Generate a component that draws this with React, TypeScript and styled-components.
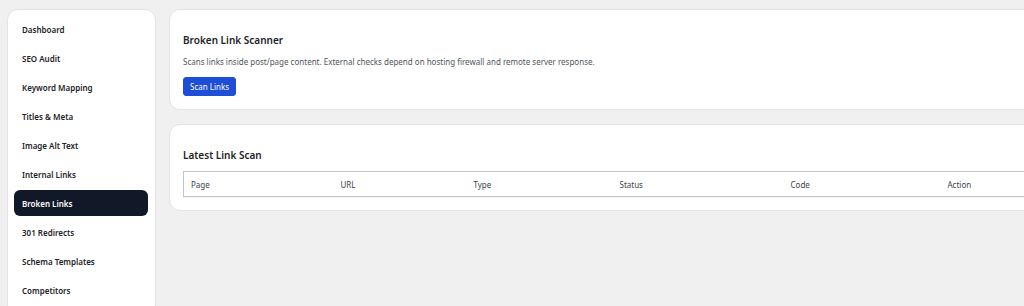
import React from 'react';
import styled, { createGlobalStyle } from 'styled-components';

const GlobalStyle = createGlobalStyle`
  html, body {
    margin: 0;
    padding: 0;
    background: #f0f0f1;
    overflow: hidden;
  }

  body {
    font-family: 'Noto Sans', 'Open Sans', sans-serif;
    color: #1d2327;
  }
`;

const Layout = styled.div`
  display: flex;
  align-items: flex-start;
  gap: 13px;
  padding: 9px 0 0 7px;
  width: 1300px;
`;

const Sidebar = styled.nav`
  flex: 0 0 149px;
  box-sizing: border-box;
  background: #fff;
  border: 1px solid #e2e4e7;
  border-radius: 11px;
  padding: 6px 7px 12px 6px;
  display: flex;
  flex-direction: column;
  gap: 3px;
`;

const NavItem = styled.a<{ $active?: boolean }>`
  display: flex;
  align-items: center;
  height: 26px;
  padding: 0 8px;
  border-radius: 6px;
  font-size: 8px;
  font-weight: 600;
  text-decoration: none;
  color: ${(p) => (p.$active ? '#fff' : '#1d2327')};
  background: ${(p) => (p.$active ? '#111827' : 'transparent')};
`;

const Main = styled.main`
  flex: 0 0 1100px;
  display: flex;
  flex-direction: column;
  gap: 14px;
`;

const Card = styled.section`
  box-sizing: border-box;
  background: #fff;
  border: 1px solid #e2e4e7;
  border-radius: 11px;
  padding: 23px 13px 13px;
`;

const Title = styled.h2`
  margin: 0 0 9px;
  font-size: 10px;
  line-height: 14px;
  font-weight: 600;
  color: #1d2327;
`;

const Description = styled.p`
  margin: 0 0 10px;
  font-size: 8px;
  line-height: 11px;
  color: #50575e;
`;

const Button = styled.button`
  display: block;
  height: 19px;
  padding: 0 6px;
  border: 1px solid #1d4ed8;
  border-radius: 3px;
  background: #1d4ed8;
  color: #fff;
  font-family: inherit;
  font-size: 8px;
  cursor: pointer;
`;

const Table = styled.table`
  width: 1057px;
  border-collapse: collapse;
  border: 1px solid #c3c4c7;
  box-shadow: 0 1px 1px rgba(0, 0, 0, 0.04);
  table-layout: fixed;
`;

const Th = styled.th`
  height: 24px;
  padding: 0 7px;
  text-align: left;
  font-size: 8px;
  font-weight: 400;
  color: #3c434a;
  border-bottom: 1px solid #c3c4c7;
`;

const navItems = [
  'Dashboard',
  'SEO Audit',
  'Keyword Mapping',
  'Titles & Meta',
  'Image Alt Text',
  'Internal Links',
  'Broken Links',
  '301 Redirects',
  'Schema Templates',
  'Competitors',
];

const columns = [
  { label: 'Page', width: 150 },
  { label: 'URL', width: 133 },
  { label: 'Type', width: 146 },
  { label: 'Status', width: 171 },
  { label: 'Code', width: 157 },
  { label: 'Action', width: 300 },
];

const App: React.FC = function () {
  return (
    <>
      <GlobalStyle />
      <Layout>
        <Sidebar>
          {navItems.map((item) => (
            <NavItem key={item} $active={item === 'Broken Links'}>
              {item}
            </NavItem>
          ))}
        </Sidebar>
        <Main>
          <Card>
            <Title>Broken Link Scanner</Title>
            <Description>
              Scans links inside post/page content. External checks depend on
              hosting firewall and remote server response.
            </Description>
            <Button>Scan Links</Button>
          </Card>
          <Card>
            <Title>Latest Link Scan</Title>
            <Table>
              <colgroup>
                {columns.map((col) => (
                  <col key={col.label} style={{ width: col.width }} />
                ))}
              </colgroup>
              <thead>
                <tr>
                  {columns.map((col) => (
                    <Th key={col.label}>{col.label}</Th>
                  ))}
                </tr>
              </thead>
            </Table>
          </Card>
        </Main>
      </Layout>
    </>
  );
};

export default App;
